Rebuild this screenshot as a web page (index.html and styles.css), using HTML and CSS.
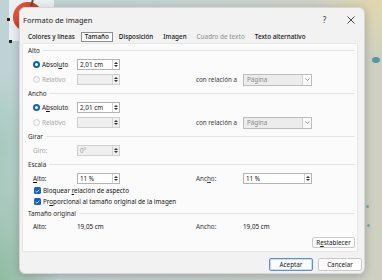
FILE: index.html
```html
<!DOCTYPE html>
<html lang="es">
<head>
<meta charset="utf-8">
<title>Formato de imagen</title>
<link rel="stylesheet" href="styles.css">
</head>
<body>
<div class="canvas">
  <div class="photo">
    <div class="apple"></div>
    <div class="stem"></div>
    <span class="handle hl"></span>
    <span class="handle hb"></span>
  </div>
  <span class="spot s1"></span>
  <span class="spot s2"></span>
  <span class="spot s3"></span>

  <div class="dialog">
    <div class="titlebar">
      <span class="title">Formato de imagen</span>
      <span class="tb-btn">?</span>
      <span class="tb-btn close">
        <svg width="8" height="8" viewBox="0 0 8 8"><path d="M0.5 0.5 L7.5 7.5 M7.5 0.5 L0.5 7.5" stroke="#333" stroke-width="0.9" fill="none"/></svg>
      </span>
    </div>

    <div class="tabs">
      <span class="tab">Colores y líneas</span>
      <span class="tab active">Tamaño</span>
      <span class="tab">Disposición</span>
      <span class="tab">Imagen</span>
      <span class="tab disabled">Cuadro de texto</span>
      <span class="tab">Texto alternativo</span>
    </div>

    <div class="panel">
      <div class="sec-head"><span>Alto</span></div>
      <div class="row">
        <label class="opt"><span class="radio on"></span><span>Absol<u>u</u>to</span></label>
        <span class="spin"><span class="val">2,01 cm</span><span class="arrows"><i class="up"></i><i class="dn"></i></span></span>
      </div>
      <div class="row">
        <label class="opt dis"><span class="radio off"></span><span>Relativo</span></label>
        <span class="spin dis"><span class="val"></span><span class="arrows"><i class="up"></i><i class="dn"></i></span></span>
        <span class="rel">con relación a</span>
        <span class="drop"><span class="val">Página</span><span class="chev"><svg width="5" height="3" viewBox="0 0 5 3"><path d="M0.5 0.5 L2.5 2.5 L4.5 0.5" stroke="#666" stroke-width="0.7" fill="none"/></svg></span></span>
      </div>

      <div class="sec-head"><span>Ancho</span></div>
      <div class="row">
        <label class="opt"><span class="radio on"></span><span>A<u>b</u>soluto</span></label>
        <span class="spin"><span class="val">2,01 cm</span><span class="arrows"><i class="up"></i><i class="dn"></i></span></span>
      </div>
      <div class="row">
        <label class="opt dis"><span class="radio off"></span><span>Relativo</span></label>
        <span class="spin dis"><span class="val"></span><span class="arrows"><i class="up"></i><i class="dn"></i></span></span>
        <span class="rel">con relación a</span>
        <span class="drop"><span class="val">Página</span><span class="chev"><svg width="5" height="3" viewBox="0 0 5 3"><path d="M0.5 0.5 L2.5 2.5 L4.5 0.5" stroke="#666" stroke-width="0.7" fill="none"/></svg></span></span>
      </div>

      <div class="sec-head"><span>Girar</span></div>
      <div class="row">
        <span class="lbl dis">Giro:</span>
        <span class="spin dis"><span class="val">0°</span><span class="arrows"><i class="up"></i><i class="dn"></i></span></span>
      </div>

      <div class="sec-head"><span>Escala</span></div>
      <div class="row scale">
        <span class="lbl"><u>A</u>lto:</span>
        <span class="spin"><span class="val">11 %</span><span class="arrows"><i class="up"></i><i class="dn"></i></span></span>
        <span class="rel"><span>Anc<u>h</u>o:</span></span>
        <span class="spin"><span class="val">11 %</span><span class="arrows"><i class="up"></i><i class="dn"></i></span></span>
      </div>
      <div class="check-row">
        <span class="check"><svg width="5" height="4" viewBox="0 0 5 4"><path d="M0.6 2 L1.9 3.2 L4.4 0.7" stroke="#fff" stroke-width="0.8" fill="none"/></svg></span>
        <span>Bloquear <u>r</u>elación de aspecto</span>
      </div>
      <div class="check-row">
        <span class="check"><svg width="5" height="4" viewBox="0 0 5 4"><path d="M0.6 2 L1.9 3.2 L4.4 0.7" stroke="#fff" stroke-width="0.8" fill="none"/></svg></span>
        <span>Pr<u>o</u>porcional al tamaño original de la imagen</span>
      </div>

      <div class="sec-head"><span>Tamaño original</span></div>
      <div class="row orig">
        <span class="lbl">Alto:</span>
        <span class="txt">19,05 cm</span>
        <span class="rel">Ancho:</span>
        <span class="txt">19,05 cm</span>
      </div>

      <div class="reset-row"><button class="btn reset">R<u>e</u>stablecer</button></div>
    </div>

    <div class="footer">
      <button class="btn primary">Aceptar</button>
      <button class="btn">Cancelar</button>
    </div>
  </div>
</div>
</body>
</html>
```

FILE: styles.css
```css
* { box-sizing: border-box; margin: 0; padding: 0; }

html, body { width: 382px; height: 280px; overflow: hidden; }

body {
  font-family: "Noto Sans", "Open Sans", sans-serif;
  font-size: 6.3px;
  color: #141414;
  background:
    radial-gradient(ellipse 70px 60px at 382px 0px, #e2d7ac 0%, rgba(226,215,172,0) 100%),
    radial-gradient(ellipse 60px 120px at 0px 280px, #8fbb9f 0%, rgba(143,187,159,0) 100%),
    radial-gradient(ellipse 40px 80px at 0px 150px, #a6c9bd 0%, rgba(166,201,189,0) 100%),
    linear-gradient(90deg, #bfd3d5 0%, #c7d2cd 60%, #cfd0c2 100%);
}

.canvas {
  position: relative;
  width: 382px;
  height: 280px;
  padding: 7px 0 0 19px;
}

/* picture behind the dialog */
.photo {
  position: absolute;
  left: 9px;
  top: -4px;
  width: 45px;
  height: 45px;
  background: #eaf0f1;
}
.apple {
  position: absolute;
  left: 4px;
  top: 6px;
  width: 30px;
  height: 30px;
  border-radius: 50%;
  background: radial-gradient(circle at 30% 35%, #e86a55 0%, #cf3b2a 55%, #b52a1f 100%);
}
.stem {
  position: absolute;
  left: 22px;
  top: 4px;
  width: 2px;
  height: 6px;
  background: #6b4a2a;
  transform: rotate(15deg);
}
.handle {
  position: absolute;
  width: 3px;
  height: 3px;
  background: #222;
}
.hl { left: -2px; top: 22px; }
.hb { left: 0px; top: 44px; }

.spot {
  position: absolute;
  border-radius: 50%;
  background: #3e8e9f;
}
.s1 { left: 372px; top: 57px; width: 8px; height: 6px; opacity: .85; }
.s2 { left: 366px; top: 205px; width: 3px; height: 3px; opacity: .6; }
.s3 { left: 367px; top: 224px; width: 3px; height: 3px; opacity: .6; }

/* dialog */
.dialog {
  position: relative;
  z-index: 1;
  width: 346px;
  height: 267px;
  background: #f2f2f2;
  border: 1px solid #d6d6d6;
  border-radius: 6px;
  box-shadow: 0 2px 10px rgba(0,0,0,.22);
  display: flex;
  flex-direction: column;
}

.titlebar {
  height: 23px;
  display: flex;
  align-items: center;
  padding-left: 3px;
}
.title { flex: 1; font-size: 7.5px; color: #1a1a1a; }
.tb-btn {
  width: 27px;
  height: 23px;
  display: flex;
  align-items: center;
  justify-content: center;
  font-size: 8px;
  color: #333;
}
.tb-btn.close { width: 26px; }

.tabs {
  height: 12px;
  display: flex;
  align-items: center;
  padding-left: 4px;
  gap: 2px;
}
.tab {
  padding: 0 3px;
  height: 10px;
  line-height: 8px;
  border: 1px solid transparent;
  color: #111;
  font-weight: 500;
  white-space: nowrap;
}
.tab.active { border-color: #8e8e8e; background: #fbfbfb; }
.tab.disabled { color: #9a9a9a; }

.panel {
  height: 209px;
  margin: 0 6px 0 2px;
  background: #fbfbfb;
  border: 1px solid #e6e6e6;
  display: flex;
  flex-direction: column;
  padding: 0 2px 3px 0;
}

.sec-head {
  height: 13px;
  display: flex;
  align-items: center;
  padding-left: 5px;
  color: #1e1e1e;
}
.sec-head::after {
  content: "";
  flex: 1;
  height: 1px;
  background: #e4e4e4;
  margin-left: 3px;
}

.row {
  height: 15px;
  display: grid;
  grid-template-columns: 44px 43px 76px 47px 69px;
  align-items: center;
  padding-left: 10px;
}
.row.scale { height: 14px; }
.row.orig { height: 12px; }
.row .rel { grid-column: 4; color: #3a3a3a; }
.row .drop { grid-column: 5; }
.row.orig .txt:last-child { grid-column: 5; }
.row.scale .spin:last-child { grid-column: 5; }

.opt { display: flex; align-items: center; gap: 2px; }
.opt.dis, .lbl.dis { color: #a6a6a6; }

.radio {
  width: 7px;
  height: 7px;
  border-radius: 50%;
  flex: none;
}
.radio.on { background: #fff; border: 2px solid #0f62b8; }
.radio.off { border: 1px solid #d0d0d0; background: #f6f6f6; }

.spin {
  height: 11px;
  display: flex;
  background: #fff;
  border: 1px solid #b4b4b4;
}
.spin .val { flex: 1; padding-left: 2px; line-height: 9px; }
.spin.dis { background: #efefef; border-color: #cfcfcf; color: #9a9a9a; }
.arrows {
  width: 7px;
  border-left: 1px solid #d4d4d4;
  display: flex;
  flex-direction: column;
  align-items: center;
  justify-content: center;
  gap: 1px;
}
.arrows i {
  width: 0;
  height: 0;
  border-left: 2px solid transparent;
  border-right: 2px solid transparent;
}
.arrows .up { border-bottom: 2px solid #333; }
.arrows .dn { border-top: 2px solid #333; }

.drop {
  height: 12px;
  display: flex;
  background: #ececec;
  border: 1px solid #bdbdbd;
  color: #8a8a8a;
}
.drop .val { flex: 1; padding-left: 3px; line-height: 10px; }
.chev {
  width: 9px;
  background: #fafafa;
  border-left: 1px solid #cfcfcf;
  display: flex;
  align-items: center;
  justify-content: center;
}

.check-row {
  height: 11px;
  display: flex;
  align-items: center;
  gap: 2px;
  padding-left: 11px;
}
.check {
  width: 7px;
  height: 7px;
  border-radius: 1.5px;
  background: #1565c0;
  display: flex;
  align-items: center;
  justify-content: center;
}

.reset-row {
  margin-top: auto;
  display: flex;
  justify-content: flex-end;
}

.btn {
  font-family: inherit;
  font-size: 6.3px;
  color: #1a1a1a;
  background: #fdfdfd;
  border: 1px solid #c9c9c9;
  border-radius: 2px;
  height: 11px;
  line-height: 9px;
}
.btn.reset { width: 43px; }

.footer {
  flex: 1;
  display: flex;
  justify-content: flex-end;
  align-items: flex-start;
  gap: 5px;
  padding: 6px 2px 0 0;
}
.footer .btn { width: 44px; height: 13px; line-height: 11px; }
.btn.primary { border-color: #5a8fd0; box-shadow: inset 0 0 0 0.5px #9dbfe8; }
```
